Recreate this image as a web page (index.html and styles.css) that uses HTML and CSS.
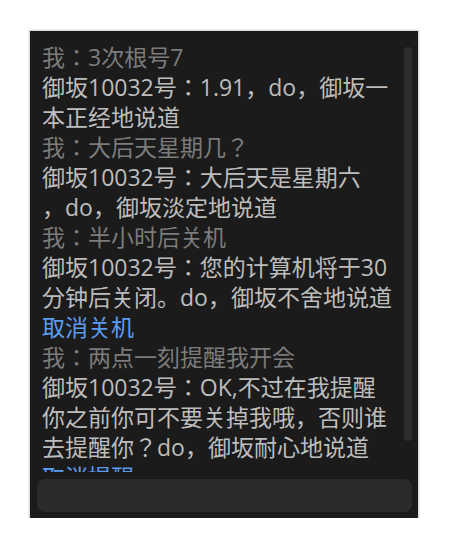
FILE: index.html
```html
<!DOCTYPE html>
<html lang="zh-CN">
<head>
<meta charset="utf-8">
<title>御坂</title>
<link rel="stylesheet" href="styles.css">
</head>
<body>
<div class="panel">
  <div class="chat">
    <div class="messages">
      <div class="msg me">我：3次根号7</div>
      <div class="msg bot">御坂10032号：1.91，do，御坂一<br>本正经地说道</div>
      <div class="msg me">我：大后天星期几？</div>
      <div class="msg bot">御坂10032号：大后天是星期六<br>，do，御坂淡定地说道</div>
      <div class="msg me">我：半小时后关机</div>
      <div class="msg bot">御坂10032号：您的计算机将于30<br>分钟后关闭。do，御坂不舍地说道</div>
      <a class="msg action" href="#">取消关机</a>
      <div class="msg me">我：两点一刻提醒我开会</div>
      <div class="msg bot">御坂10032号：OK,不过在我提醒<br>你之前你可不要关掉我哦，否则谁<br>去提醒你？do，御坂耐心地说道</div>
      <a class="msg action" href="#">取消提醒</a>
    </div>
    <div class="scrollbar"><div class="thumb"></div></div>
  </div>
  <div class="input"></div>
</div>
</body>
</html>
```
FILE: styles.css
```css
html, body {
  margin: 0;
  padding: 0;
  background: #ffffff;
}

.panel {
  box-sizing: border-box;
  margin: 31px 0 0 30px;
  width: 388px;
  height: 487px;
  padding: 11px 6px 6px 7px;
  background: #1b1b1b;
  box-shadow: 0 0 2px 1px rgba(0, 0, 0, 0.2);
  display: flex;
  flex-direction: column;
  gap: 7px;
}

.chat {
  height: 430px;
  display: flex;
  flex-direction: row;
}

.messages {
  flex: 1;
  overflow: hidden;
  padding-left: 5px;
  font-family: "Open Sans", "Noto Sans CJK JP", sans-serif;
  font-size: 23px;
  line-height: 30px;
  white-space: nowrap;
  font-feature-settings: "locl" 0;
}

.msg {
  display: block;
}

.me {
  color: #7c7c7c;
}

.bot {
  color: #bdbdbd;
}

.action {
  color: #5c9cf0;
  text-decoration: none;
}

.scrollbar {
  width: 8px;
  padding-top: 5px;
}

.thumb {
  width: 8px;
  height: 394px;
  border-radius: 4px;
  background: #2d2d2d;
}

.input {
  height: 33px;
  border-radius: 8px;
  background: #2b2b2b;
}
```
